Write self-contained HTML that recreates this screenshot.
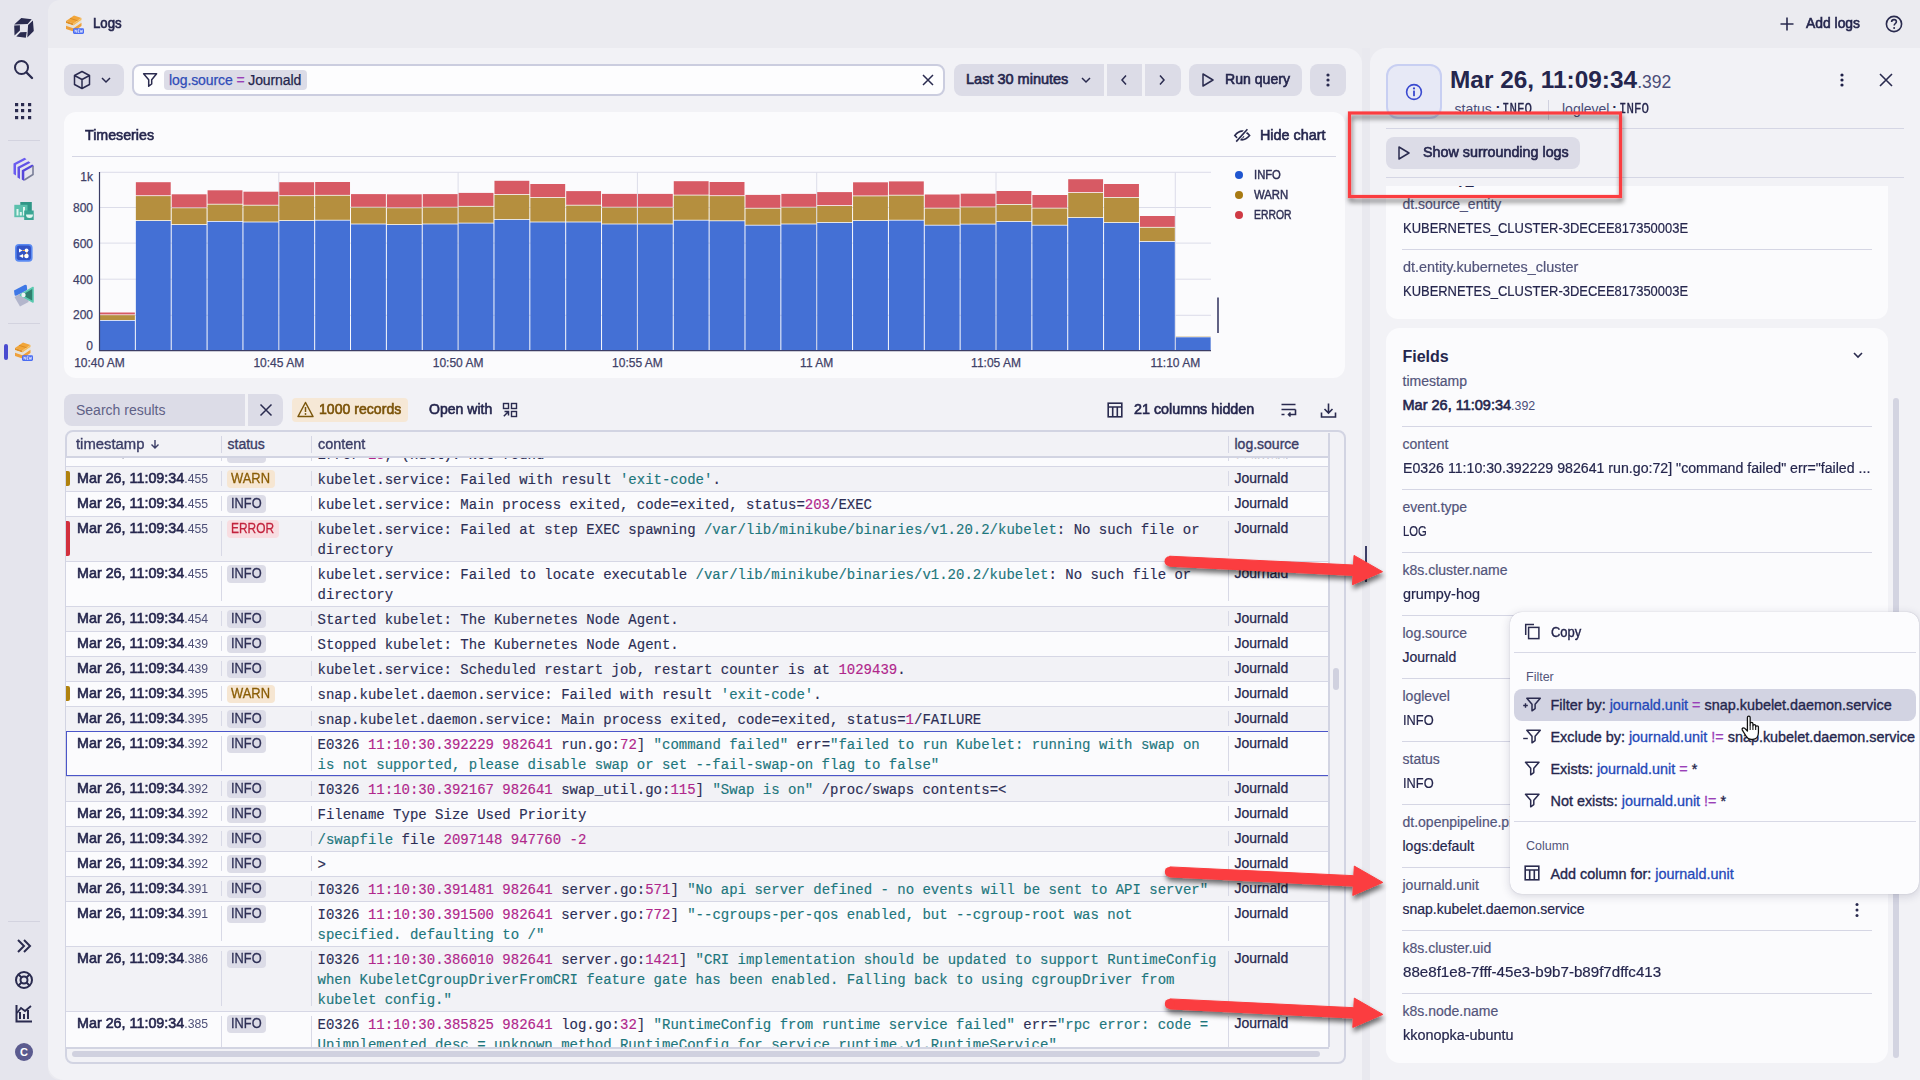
<!DOCTYPE html>
<html><head><meta charset="utf-8"><title>Logs</title>
<style>
*{box-sizing:border-box;margin:0;padding:0}
html,body{width:1920px;height:1080px;overflow:hidden}
body{position:relative;background:#e5e5ed;font-family:"Liberation Sans",sans-serif;color:#25264d;font-size:14px}
.a{position:absolute}
.b{font-weight:bold}
.mono{font-family:"Liberation Mono",monospace}
svg{display:block}
.nowrap{white-space:nowrap}
</style></head><body>

<div class="a" style="left:48px;top:0;width:1872px;height:1080px;background:#ebebf0;border-radius:12px 0 0 12px;overflow:hidden">
</div>
<div class="a" style="left:48px;top:48px;width:1314px;height:1032px;background:#f2f2f6;border-radius:0 16px 0 16px"></div>
<div class="a" style="left:1362px;top:48px;width:8px;height:1032px;background:#e9e9ef"></div>
<div class="a" style="left:1370px;top:48px;width:550px;height:1032px;background:#f2f2f6;border-radius:16px 0 0 0"></div>
<svg class="a" style="left:0;top:0" width="48" height="48" viewBox="0 0 48 48"><path d="M21.3 18.1 L31.7 19.3 L27.6 23.9 L14.2 24.4 Z M14.2 25.6 L19.9 25.3 L19.9 30.4 L14.5 35.4 Z M16.3 36.6 L20.4 32.3 L26.7 32.1 L25.8 37.8 Z M28.1 25 L32.9 20.6 L33.8 31 L27.3 37.5 Z" fill="#2a2b4f"/></svg>
<svg class="a" style="left:13px;top:59px" width="21" height="21" viewBox="0 0 21 21"><circle cx="8.5" cy="8.5" r="6.5" fill="none" stroke="#2a2b4f" stroke-width="2"/><path d="M13.5 13.5 L19 19" stroke="#2a2b4f" stroke-width="2.4" stroke-linecap="round"/></svg>
<svg class="a" style="left:14px;top:102px" width="20" height="20" viewBox="0 0 20 20"><rect x="1" y="1" width="3.2" height="3.2" fill="#2a2b4f"/><rect x="1" y="7" width="3.2" height="3.2" fill="#2a2b4f"/><rect x="1" y="14" width="3.2" height="3.2" fill="#2a2b4f"/><rect x="7" y="1" width="3.2" height="3.2" fill="#2a2b4f"/><rect x="7" y="7" width="3.2" height="3.2" fill="#2a2b4f"/><rect x="7" y="14" width="3.2" height="3.2" fill="#2a2b4f"/><rect x="14" y="1" width="3.2" height="3.2" fill="#2a2b4f"/><rect x="14" y="7" width="3.2" height="3.2" fill="#2a2b4f"/><rect x="14" y="14" width="3.2" height="3.2" fill="#2a2b4f"/></svg>
<div class="a" style="left:8px;top:140px;width:32px;height:1px;background:#d3d3df"></div>
<svg class="a" style="left:0;top:150px" width="48" height="34" viewBox="0 150 48 34"><g fill="#6b5cf0"><path d="M13.5 163.5 L24.5 157.8 L26.5 159.2 L16 164.8 L16 175.5 L13.5 174 Z"/><path d="M17.5 167 L28.5 161.3 L30.5 162.7 L20 168.3 L20 179 L17.5 177.5 Z" fill="#6152e6"/><path d="M21.8 170.2 L32.2 164.6 L34 166 L24.3 171.6 L24.3 181 L21.8 179.6 Z" fill="#5647da"/></g><path d="M33 166 L33 174.5 L24.3 180" fill="none" stroke="#7a7f98" stroke-width="1.6"/></svg>
<svg class="a" style="left:0;top:198px" width="48" height="26" viewBox="0 198 48 26"><rect x="20.3" y="202" width="11.5" height="10" fill="#2f9686"/><rect x="14.3" y="204.8" width="13.2" height="12.4" fill="#5cc0ad"/><rect x="16.5" y="209" width="2" height="6.5" fill="#dff6f0"/><rect x="19.8" y="212" width="2" height="3.5" fill="#dff6f0"/><rect x="23" y="207" width="2" height="8.5" fill="#dff6f0"/><rect x="24.2" y="210.5" width="9.5" height="9.5" fill="#3aa593"/><path d="M26 214.5 A3.5 3.5 0 0 0 33 214.5 Z" fill="#dff6f0"/></svg>
<svg class="a" style="left:0;top:240px" width="48" height="26" viewBox="0 240 48 26"><rect x="15" y="244" width="17.6" height="17.7" rx="4" fill="#5b8bf2"/><rect x="16.6" y="245.6" width="14.4" height="14.5" rx="2.8" fill="#3354c6"/><path d="M19 248.5 L22.5 250.5 L19 252.5 Z" fill="#fff"/><circle cx="26.5" cy="250.3" r="1.9" fill="#fff"/><path d="M22.5 250.5 H25 M26.8 252 V255 M21.5 256 H25" stroke="#f0a84a" stroke-width="1.1"/><path d="M23 254 L19 256 L23 258 Z" fill="#fff"/><circle cx="26.5" cy="256" r="2.2" fill="#fff"/></svg>
<svg class="a" style="left:0;top:282px" width="48" height="28" viewBox="0 282 48 28"><path d="M14.5 297 L24 291.5 L28.5 296 L28.5 302 L20 306.5 Z" fill="#8b90b0" opacity="0.55"/><path d="M14 290.5 L24.5 285 Q26 284.3 26.8 285.6 L27.2 290 L16.5 295.5 Q14.8 296.2 14.5 294.5 Z" fill="#3f78e6"/><path d="M33 287.5 L33 302 L20.5 295 Z" fill="#2f7f6e" stroke="#5bcab0" stroke-width="1.6" stroke-linejoin="round"/><circle cx="23.5" cy="295" r="2.2" fill="#eef6f4"/></svg>
<div class="a" style="left:8px;top:323px;width:32px;height:1px;background:#d3d3df"></div>
<div class="a" style="left:4px;top:344px;width:4px;height:16px;border-radius:2px;background:#4a4bd0"></div>
<svg class="a" style="left:12px;top:340px" width="22" height="22" viewBox="0 0 22 22"><path d="M3 8 L11 2.5 L18.5 5 L10.5 10.5 Z" fill="#f2a63a"/><path d="M7 5.3 L14.8 7.8" stroke="#d98a20" stroke-width="0.9"/><path d="M3 8 L10.5 10.5 L10.5 12.5 L3 10 Z" fill="#e08f22"/><path d="M10.5 10.5 L18.5 5 L18.5 7 L10.5 12.5 Z" fill="#f6bd5c"/><path d="M3 10.3 L10.5 12.8 L18.5 7.3 L18.5 9.5 L10.5 15 L3 12.5 Z" fill="#e6e2d8"/><path d="M3 12.8 L10.5 15.3 L18.5 9.8 L18.5 13 L10.5 18.5 L3 16 Z" fill="#eea03a"/><rect x="10" y="15.3" width="11" height="5.6" rx="1.3" fill="#4a6cf2"/><path d="M12 19.5 V16.7 L13.6 19.5 V16.7 M15 16.7 V19.5 H16.4 M15 18.1 H16.2 M15 16.7 H16.4 M17.2 16.7 L17.8 19.5 L18.4 17.5 L19 19.5 L19.6 16.7" fill="none" stroke="#fff" stroke-width="0.6"/></svg>
<div class="a" style="left:8px;top:921px;width:32px;height:1px;background:#d3d3df"></div>
<svg class="a" style="left:16px;top:938px" width="17" height="16" viewBox="0 0 17 16"><path d="M2 2 L8 8 L2 14 M8 2 L14 8 L8 14" fill="none" stroke="#2a2b4f" stroke-width="2"/></svg>
<svg class="a" style="left:14px;top:970px" width="20" height="20" viewBox="0 0 20 20"><circle cx="10" cy="10" r="8" fill="none" stroke="#2a2b4f" stroke-width="2"/><circle cx="10" cy="10" r="3.5" fill="none" stroke="#2a2b4f" stroke-width="2"/><path d="M4.5 4.5 L7.5 7.5 M15.5 4.5 L12.5 7.5 M4.5 15.5 L7.5 12.5 M15.5 15.5 L12.5 12.5" stroke="#2a2b4f" stroke-width="2"/></svg>
<svg class="a" style="left:15px;top:1004px" width="18" height="19" viewBox="0 0 18 19"><path d="M1.5 1 L1.5 17.5 L17 17.5" fill="none" stroke="#2a2b4f" stroke-width="2"/><path d="M5 15 L5 8 M9 15 L9 10 M13 15 L13 6" stroke="#2a2b4f" stroke-width="2"/><path d="M2 9 L6 4 L10 7 L16 2" fill="none" stroke="#2a2b4f" stroke-width="1.8"/></svg>
<div class="a b" style="left:15px;top:1043px;width:18px;height:18px;border-radius:9px;background:#5b5b8f;color:#fff;font-size:11px;line-height:18px;text-align:center">C</div>
<svg class="a" style="left:63px;top:13px" width="22" height="22" viewBox="0 0 22 22"><path d="M3 8 L11 2.5 L18.5 5 L10.5 10.5 Z" fill="#f2a63a"/><path d="M7 5.3 L14.8 7.8" stroke="#d98a20" stroke-width="0.9"/><path d="M3 8 L10.5 10.5 L10.5 12.5 L3 10 Z" fill="#e08f22"/><path d="M10.5 10.5 L18.5 5 L18.5 7 L10.5 12.5 Z" fill="#f6bd5c"/><path d="M3 10.3 L10.5 12.8 L18.5 7.3 L18.5 9.5 L10.5 15 L3 12.5 Z" fill="#e6e2d8"/><path d="M3 12.8 L10.5 15.3 L18.5 9.8 L18.5 13 L10.5 18.5 L3 16 Z" fill="#eea03a"/><rect x="10" y="15.3" width="11" height="5.6" rx="1.3" fill="#4a6cf2"/><path d="M12 19.5 V16.7 L13.6 19.5 V16.7 M15 16.7 V19.5 H16.4 M15 18.1 H16.2 M15 16.7 H16.4 M17.2 16.7 L17.8 19.5 L18.4 17.5 L19 19.5 L19.6 16.7" fill="none" stroke="#fff" stroke-width="0.6"/></svg>
<div class="a nowrap" style="left:92.5px;top:13px;font-size:14.5px;line-height:20px;-webkit-text-stroke:0.6px #25264d;transform:scaleX(0.913);transform-origin:0 0">Logs</div>
<svg class="a" style="left:1779px;top:16px" width="16" height="16" viewBox="0 0 16 16"><path d="M8 1.5 V14.5 M1.5 8 H14.5" stroke="#2a2b4f" stroke-width="1.6"/></svg>
<div class="a nowrap" style="left:1806px;top:13px;font-size:14.5px;line-height:20px;-webkit-text-stroke:0.6px #25264d;transform:scaleX(0.957);transform-origin:0 0">Add logs</div>
<svg class="a" style="left:1885px;top:15px" width="18" height="18" viewBox="0 0 18 18"><circle cx="9" cy="9" r="7.6" fill="none" stroke="#2a2b4f" stroke-width="1.6"/><path d="M6.6 7 C6.6 5.4 7.7 4.6 9 4.6 C10.4 4.6 11.4 5.5 11.4 6.8 C11.4 8.4 9.2 8.6 9.2 10.4" fill="none" stroke="#2a2b4f" stroke-width="1.6"/><circle cx="9.1" cy="13" r="1" fill="#2a2b4f"/></svg>
<div class="a" style="left:64px;top:64px;width:60px;height:32px;border-radius:8px;background:#dcdce7"></div>
<svg class="a" style="left:73px;top:70px" width="18" height="20" viewBox="0 0 18 20"><path d="M9 1.5 L16.5 5.5 L16.5 14.5 L9 18.5 L1.5 14.5 L1.5 5.5 Z M1.5 5.5 L9 9.5 L16.5 5.5 M9 9.5 L9 18.5" fill="none" stroke="#2a2b4f" stroke-width="1.5" stroke-linejoin="round"/></svg>
<svg class="a" style="left:101px;top:76px" width="10" height="8" viewBox="0 0 10 8"><path d="M1 2 L5 6 L9 2" fill="none" stroke="#2a2b4f" stroke-width="1.5"/></svg>
<div class="a" style="left:132px;top:64px;width:813px;height:32px;border-radius:8px;background:#fdfdfe;border:2px solid #cbcddf"></div>
<svg class="a" style="left:142px;top:72px" width="16" height="16" viewBox="0 0 16 16"><path d="M1.6 1.8 H14.6 L9.7 7.7 V12 L6.7 14.2 V7.7 Z" fill="none" stroke="#2a2b4f" stroke-width="1.5" stroke-linejoin="round"/></svg>
<div class="a" style="left:164px;top:70px;width:143px;height:20px;border-radius:4px;background:#dcdce7"></div>
<div class="a nowrap" style="left:169px;top:70px;font-size:14px;line-height:20px;letter-spacing:-0.1px;-webkit-text-stroke:0.25px currentColor"><span style="color:#2f4cb8">log.source</span> <span style="color:#9a3fb8">=</span> Journald</div>
<svg class="a" style="left:921px;top:73px" width="14" height="14" viewBox="0 0 14 14"><path d="M2 2 L12 12 M12 2 L2 12" stroke="#2a2b4f" stroke-width="1.5"/></svg>
<div class="a" style="left:954px;top:64px;width:150px;height:32px;border-radius:8px 0 0 8px;background:#dcdce7"></div>
<div class="a" style="left:1107px;top:64px;width:35px;height:32px;background:#dcdce7"></div>
<div class="a" style="left:1145px;top:64px;width:36px;height:32px;border-radius:0 8px 8px 0;background:#dcdce7"></div>
<div class="a nowrap" style="left:966px;top:69px;font-size:14.5px;line-height:20px;-webkit-text-stroke:0.6px #25264d;transform:scaleX(1.000);transform-origin:0 0">Last 30 minutes</div>
<svg class="a" style="left:1081px;top:76px" width="10" height="8" viewBox="0 0 10 8"><path d="M1 2 L5 6 L9 2" fill="none" stroke="#2a2b4f" stroke-width="1.5"/></svg>
<svg class="a" style="left:1120px;top:74px" width="8" height="12" viewBox="0 0 8 12"><path d="M6 1.5 L2 6 L6 10.5" fill="none" stroke="#2a2b4f" stroke-width="1.5"/></svg>
<svg class="a" style="left:1158px;top:74px" width="8" height="12" viewBox="0 0 8 12"><path d="M2 1.5 L6 6 L2 10.5" fill="none" stroke="#2a2b4f" stroke-width="1.5"/></svg>
<div class="a" style="left:1189px;top:64px;width:113px;height:32px;border-radius:8px;background:#dcdce7"></div>
<svg class="a" style="left:1201px;top:72px" width="14" height="16" viewBox="0 0 14 16"><path d="M2 2 L12 8 L2 14 Z" fill="none" stroke="#2a2b4f" stroke-width="1.5" stroke-linejoin="round"/></svg>
<div class="a nowrap" style="left:1225px;top:69px;font-size:14.5px;line-height:20px;-webkit-text-stroke:0.6px #25264d;transform:scaleX(0.972);transform-origin:0 0">Run query</div>
<div class="a" style="left:1310px;top:64px;width:36px;height:32px;border-radius:8px;background:#dcdce7"></div>
<svg class="a" style="left:1325px;top:72px" width="6" height="16" viewBox="0 0 6 16"><circle cx="3" cy="3" r="1.6" fill="#2a2b4f"/><circle cx="3" cy="8" r="1.6" fill="#2a2b4f"/><circle cx="3" cy="13" r="1.6" fill="#2a2b4f"/></svg>
<div class="a" style="left:64px;top:112px;width:1281px;height:266px;border-radius:12px;background:#fbfbfd"></div>
<div class="a nowrap" style="left:84.5px;top:125px;font-size:14.5px;line-height:20px;-webkit-text-stroke:0.6px #25264d;transform:scaleX(0.981);transform-origin:0 0">Timeseries</div>
<svg class="a" style="left:1230px;top:124px" width="24" height="22" viewBox="1230 124 24 22"><path d="M1234.8 135.5 Q1242 126.8 1249.6 135.5 Q1242 144.2 1234.8 135.5 Z" fill="none" stroke="#2a2b4f" stroke-width="1.6"/><path d="M1240.6 138.8 Q1243.2 138.6 1243.9 136.2" fill="none" stroke="#2a2b4f" stroke-width="1.2"/><path d="M1235.8 142 L1247.6 128.8" stroke="#fbfbfd" stroke-width="3.6"/><path d="M1236.2 141.6 L1247.4 129.2" stroke="#2a2b4f" stroke-width="1.6"/></svg>
<div class="a nowrap" style="left:1260px;top:125px;font-size:14.5px;line-height:20px;-webkit-text-stroke:0.6px #25264d;transform:scaleX(0.990);transform-origin:0 0">Hide chart</div>
<div class="a" style="left:72px;top:156px;width:1264px;height:1px;background:#d5d6e4"></div>
<svg class="a" style="left:0;top:0;overflow:visible" width="1920" height="400" viewBox="0 0 1920 400"><line x1="99.5" y1="172.3" x2="1211" y2="172.3" stroke="#dcdde9" stroke-width="1"/><line x1="99.5" y1="207.5" x2="1211" y2="207.5" stroke="#dcdde9" stroke-width="1"/><line x1="99.5" y1="243.1" x2="1211" y2="243.1" stroke="#dcdde9" stroke-width="1"/><line x1="99.5" y1="279.2" x2="1211" y2="279.2" stroke="#dcdde9" stroke-width="1"/><line x1="99.5" y1="315.3" x2="1211" y2="315.3" stroke="#dcdde9" stroke-width="1"/><line x1="278.8" y1="172.3" x2="278.8" y2="350" stroke="#dcdde9" stroke-width="1"/><line x1="458.1" y1="172.3" x2="458.1" y2="350" stroke="#dcdde9" stroke-width="1"/><line x1="637.4" y1="172.3" x2="637.4" y2="350" stroke="#dcdde9" stroke-width="1"/><line x1="816.7" y1="172.3" x2="816.7" y2="350" stroke="#dcdde9" stroke-width="1"/><line x1="996.0" y1="172.3" x2="996.0" y2="350" stroke="#dcdde9" stroke-width="1"/><line x1="1175.3" y1="172.3" x2="1175.3" y2="350" stroke="#dcdde9" stroke-width="1"/><rect x="100.00" y="320.80" width="34.86" height="29.70" fill="#4470d5"/><rect x="100.00" y="315.20" width="34.86" height="4.80" fill="#b58f3e"/><rect x="100.00" y="312.50" width="34.86" height="1.90" fill="#d75a64"/><rect x="135.86" y="221.00" width="34.86" height="129.50" fill="#4470d5"/><rect x="135.86" y="196.10" width="34.86" height="24.10" fill="#b58f3e"/><rect x="135.86" y="182.20" width="34.86" height="13.10" fill="#d75a64"/><rect x="171.72" y="225.00" width="34.86" height="125.50" fill="#4470d5"/><rect x="171.72" y="208.20" width="34.86" height="16.00" fill="#b58f3e"/><rect x="171.72" y="194.30" width="34.86" height="13.10" fill="#d75a64"/><rect x="207.58" y="221.80" width="34.86" height="128.70" fill="#4470d5"/><rect x="207.58" y="204.60" width="34.86" height="16.40" fill="#b58f3e"/><rect x="207.58" y="190.30" width="34.86" height="13.50" fill="#d75a64"/><rect x="243.44" y="222.40" width="34.86" height="128.10" fill="#4470d5"/><rect x="243.44" y="205.60" width="34.86" height="16.00" fill="#b58f3e"/><rect x="243.44" y="191.70" width="34.86" height="13.10" fill="#d75a64"/><rect x="279.30" y="221.00" width="34.86" height="129.50" fill="#4470d5"/><rect x="279.30" y="196.10" width="34.86" height="24.10" fill="#b58f3e"/><rect x="279.30" y="182.20" width="34.86" height="13.10" fill="#d75a64"/><rect x="315.16" y="220.60" width="34.86" height="129.90" fill="#4470d5"/><rect x="315.16" y="195.70" width="34.86" height="24.10" fill="#b58f3e"/><rect x="315.16" y="182.00" width="34.86" height="12.90" fill="#d75a64"/><rect x="351.02" y="224.40" width="34.86" height="126.10" fill="#4470d5"/><rect x="351.02" y="207.60" width="34.86" height="16.00" fill="#b58f3e"/><rect x="351.02" y="194.10" width="34.86" height="12.70" fill="#d75a64"/><rect x="386.88" y="225.00" width="34.86" height="125.50" fill="#4470d5"/><rect x="386.88" y="208.20" width="34.86" height="16.00" fill="#b58f3e"/><rect x="386.88" y="194.30" width="34.86" height="13.10" fill="#d75a64"/><rect x="422.74" y="224.40" width="34.86" height="126.10" fill="#4470d5"/><rect x="422.74" y="207.60" width="34.86" height="16.00" fill="#b58f3e"/><rect x="422.74" y="194.10" width="34.86" height="12.70" fill="#d75a64"/><rect x="458.60" y="223.50" width="34.86" height="127.00" fill="#4470d5"/><rect x="458.60" y="206.70" width="34.86" height="16.00" fill="#b58f3e"/><rect x="458.60" y="192.90" width="34.86" height="13.00" fill="#d75a64"/><rect x="494.46" y="219.90" width="34.86" height="130.60" fill="#4470d5"/><rect x="494.46" y="194.90" width="34.86" height="24.20" fill="#b58f3e"/><rect x="494.46" y="180.80" width="34.86" height="13.30" fill="#d75a64"/><rect x="530.32" y="222.40" width="34.86" height="128.10" fill="#4470d5"/><rect x="530.32" y="197.90" width="34.86" height="23.70" fill="#b58f3e"/><rect x="530.32" y="184.00" width="34.86" height="13.10" fill="#d75a64"/><rect x="566.18" y="222.40" width="34.86" height="128.10" fill="#4470d5"/><rect x="566.18" y="205.60" width="34.86" height="16.00" fill="#b58f3e"/><rect x="566.18" y="191.10" width="34.86" height="13.70" fill="#d75a64"/><rect x="602.04" y="224.40" width="34.86" height="126.10" fill="#4470d5"/><rect x="602.04" y="207.60" width="34.86" height="16.00" fill="#b58f3e"/><rect x="602.04" y="193.90" width="34.86" height="12.90" fill="#d75a64"/><rect x="637.90" y="224.40" width="34.86" height="126.10" fill="#4470d5"/><rect x="637.90" y="207.60" width="34.86" height="16.00" fill="#b58f3e"/><rect x="637.90" y="193.90" width="34.86" height="12.90" fill="#d75a64"/><rect x="673.76" y="220.60" width="34.86" height="129.90" fill="#4470d5"/><rect x="673.76" y="195.50" width="34.86" height="24.30" fill="#b58f3e"/><rect x="673.76" y="181.20" width="34.86" height="13.50" fill="#d75a64"/><rect x="709.62" y="221.20" width="34.86" height="129.30" fill="#4470d5"/><rect x="709.62" y="196.10" width="34.86" height="24.30" fill="#b58f3e"/><rect x="709.62" y="182.00" width="34.86" height="13.30" fill="#d75a64"/><rect x="745.48" y="225.60" width="34.86" height="124.90" fill="#4470d5"/><rect x="745.48" y="208.60" width="34.86" height="16.20" fill="#b58f3e"/><rect x="745.48" y="194.90" width="34.86" height="12.90" fill="#d75a64"/><rect x="781.34" y="224.40" width="34.86" height="126.10" fill="#4470d5"/><rect x="781.34" y="207.60" width="34.86" height="16.00" fill="#b58f3e"/><rect x="781.34" y="193.90" width="34.86" height="12.90" fill="#d75a64"/><rect x="817.20" y="222.90" width="34.86" height="127.60" fill="#4470d5"/><rect x="817.20" y="206.00" width="34.86" height="16.10" fill="#b58f3e"/><rect x="817.20" y="192.10" width="34.86" height="13.10" fill="#d75a64"/><rect x="853.06" y="221.00" width="34.86" height="129.50" fill="#4470d5"/><rect x="853.06" y="196.30" width="34.86" height="23.90" fill="#b58f3e"/><rect x="853.06" y="182.30" width="34.86" height="13.20" fill="#d75a64"/><rect x="888.92" y="220.60" width="34.86" height="129.90" fill="#4470d5"/><rect x="888.92" y="195.60" width="34.86" height="24.20" fill="#b58f3e"/><rect x="888.92" y="181.40" width="34.86" height="13.40" fill="#d75a64"/><rect x="924.78" y="225.60" width="34.86" height="124.90" fill="#4470d5"/><rect x="924.78" y="208.50" width="34.86" height="16.30" fill="#b58f3e"/><rect x="924.78" y="194.50" width="34.86" height="13.20" fill="#d75a64"/><rect x="960.64" y="224.50" width="34.86" height="126.00" fill="#4470d5"/><rect x="960.64" y="207.40" width="34.86" height="16.30" fill="#b58f3e"/><rect x="960.64" y="193.70" width="34.86" height="12.90" fill="#d75a64"/><rect x="996.50" y="221.90" width="34.86" height="128.60" fill="#4470d5"/><rect x="996.50" y="204.80" width="34.86" height="16.30" fill="#b58f3e"/><rect x="996.50" y="191.00" width="34.86" height="13.00" fill="#d75a64"/><rect x="1032.36" y="225.60" width="34.86" height="124.90" fill="#4470d5"/><rect x="1032.36" y="208.50" width="34.86" height="16.30" fill="#b58f3e"/><rect x="1032.36" y="195.00" width="34.86" height="12.70" fill="#d75a64"/><rect x="1068.22" y="218.00" width="34.86" height="132.50" fill="#4470d5"/><rect x="1068.22" y="193.00" width="34.86" height="24.20" fill="#b58f3e"/><rect x="1068.22" y="179.20" width="34.86" height="13.00" fill="#d75a64"/><rect x="1104.08" y="223.00" width="34.86" height="127.50" fill="#4470d5"/><rect x="1104.08" y="197.80" width="34.86" height="24.40" fill="#b58f3e"/><rect x="1104.08" y="184.00" width="34.86" height="13.00" fill="#d75a64"/><rect x="1139.94" y="241.90" width="34.86" height="108.60" fill="#4470d5"/><rect x="1139.94" y="227.70" width="34.86" height="13.40" fill="#b58f3e"/><rect x="1139.94" y="216.00" width="34.86" height="10.90" fill="#d75a64"/><rect x="1175.80" y="337.30" width="34.86" height="13.20" fill="#4470d5"/><rect x="1175.80" y="336.20" width="34.86" height="0.30" fill="#b58f3e"/><line x1="99.5" y1="172" x2="99.5" y2="351" stroke="#3b3d66" stroke-width="1.2"/><line x1="99" y1="350.6" x2="1211" y2="350.6" stroke="#3b3d66" stroke-width="1.2"/><line x1="1218" y1="297.5" x2="1218" y2="333" stroke="#3b3d66" stroke-width="1.6"/></svg>
<div class="a nowrap" style="right:1827px;top:169.5px;font-size:12px;line-height:14px;color:#3f4168;-webkit-text-stroke:0.25px #3f4168;text-align:right">1k</div>
<div class="a nowrap" style="right:1827px;top:200.5px;font-size:12px;line-height:14px;color:#3f4168;-webkit-text-stroke:0.25px #3f4168;text-align:right">800</div>
<div class="a nowrap" style="right:1827px;top:236.5px;font-size:12px;line-height:14px;color:#3f4168;-webkit-text-stroke:0.25px #3f4168;text-align:right">600</div>
<div class="a nowrap" style="right:1827px;top:272.5px;font-size:12px;line-height:14px;color:#3f4168;-webkit-text-stroke:0.25px #3f4168;text-align:right">400</div>
<div class="a nowrap" style="right:1827px;top:307.5px;font-size:12px;line-height:14px;color:#3f4168;-webkit-text-stroke:0.25px #3f4168;text-align:right">200</div>
<div class="a nowrap" style="right:1827px;top:339.0px;font-size:12px;line-height:14px;color:#3f4168;-webkit-text-stroke:0.25px #3f4168;text-align:right">0</div>
<div class="a nowrap" style="left:99.5px;top:356px;width:80px;margin-left:-40px;text-align:center;font-size:12px;line-height:14px;color:#3f4168;-webkit-text-stroke:0.25px #3f4168">10:40 AM</div>
<div class="a nowrap" style="left:278.8px;top:356px;width:80px;margin-left:-40px;text-align:center;font-size:12px;line-height:14px;color:#3f4168;-webkit-text-stroke:0.25px #3f4168">10:45 AM</div>
<div class="a nowrap" style="left:458.1px;top:356px;width:80px;margin-left:-40px;text-align:center;font-size:12px;line-height:14px;color:#3f4168;-webkit-text-stroke:0.25px #3f4168">10:50 AM</div>
<div class="a nowrap" style="left:637.4px;top:356px;width:80px;margin-left:-40px;text-align:center;font-size:12px;line-height:14px;color:#3f4168;-webkit-text-stroke:0.25px #3f4168">10:55 AM</div>
<div class="a nowrap" style="left:816.7px;top:356px;width:80px;margin-left:-40px;text-align:center;font-size:12px;line-height:14px;color:#3f4168;-webkit-text-stroke:0.25px #3f4168">11 AM</div>
<div class="a nowrap" style="left:996.0px;top:356px;width:80px;margin-left:-40px;text-align:center;font-size:12px;line-height:14px;color:#3f4168;-webkit-text-stroke:0.25px #3f4168">11:05 AM</div>
<div class="a nowrap" style="left:1175.3px;top:356px;width:80px;margin-left:-40px;text-align:center;font-size:12px;line-height:14px;color:#3f4168;-webkit-text-stroke:0.25px #3f4168">11:10 AM</div>
<div class="a" style="left:1235px;top:171.0px;width:8px;height:8px;border-radius:4px;background:#1f56d0"></div>
<div class="a nowrap" style="left:1253.5px;top:167.5px;font-size:12.5px;line-height:14px;color:#2f3055;-webkit-text-stroke:0.45px #2f3055;transform:scaleX(0.900);transform-origin:0 0">INFO</div>
<div class="a" style="left:1235px;top:191.0px;width:8px;height:8px;border-radius:4px;background:#a87a12"></div>
<div class="a nowrap" style="left:1253.5px;top:187.5px;font-size:12.5px;line-height:14px;color:#2f3055;-webkit-text-stroke:0.45px #2f3055;transform:scaleX(0.907);transform-origin:0 0">WARN</div>
<div class="a" style="left:1235px;top:211.0px;width:8px;height:8px;border-radius:4px;background:#cf3a44"></div>
<div class="a nowrap" style="left:1253.5px;top:207.5px;font-size:12.5px;line-height:14px;color:#2f3055;-webkit-text-stroke:0.45px #2f3055;transform:scaleX(0.830);transform-origin:0 0">ERROR</div>
<div class="a" style="left:64px;top:394px;width:181px;height:32px;border-radius:8px 0 0 8px;background:#dcdce7"></div>
<div class="a" style="left:248px;top:394px;width:35px;height:32px;border-radius:0 8px 8px 0;background:#dcdce7"></div>
<div class="a nowrap" style="left:76px;top:400px;font-size:14px;line-height:20px;color:#5f6186">Search results</div>
<svg class="a" style="left:259px;top:403px" width="14" height="14" viewBox="0 0 14 14"><path d="M1.5 1.5 L12.5 12.5 M12.5 1.5 L1.5 12.5" stroke="#2a2b4f" stroke-width="1.5"/></svg>
<div class="a" style="left:292px;top:398px;width:116px;height:24px;border-radius:4px;background:#f6e8d6"></div>
<svg class="a" style="left:297px;top:401px" width="17" height="17" viewBox="0 0 17 17"><path d="M8.5 1.5 L16 15.5 L1 15.5 Z" fill="none" stroke="#7a560c" stroke-width="1.5" stroke-linejoin="round"/><path d="M8.5 6 V11" stroke="#7a560c" stroke-width="1.5"/><circle cx="8.5" cy="13" r="0.9" fill="#7a560c"/></svg>
<div class="a nowrap" style="left:318.5px;top:399px;font-size:14.5px;line-height:20px;color:#7a5208;-webkit-text-stroke:0.6px #7a5208;transform:scaleX(0.972);transform-origin:0 0">1000 records</div>
<div class="a nowrap" style="left:428.5px;top:399px;font-size:14.5px;line-height:20px;-webkit-text-stroke:0.6px #25264d;transform:scaleX(0.969);transform-origin:0 0">Open with</div>
<svg class="a" style="left:502px;top:402px" width="16" height="16" viewBox="0 0 16 16"><rect x="1.5" y="1.5" width="5" height="5" fill="none" stroke="#2a2b4f" stroke-width="1.4"/><rect x="9.5" y="1.5" width="5" height="5" fill="none" stroke="#2a2b4f" stroke-width="1.4"/><rect x="9.5" y="9.5" width="5" height="5" fill="none" stroke="#2a2b4f" stroke-width="1.4"/><path d="M1.8 14.2 L6.5 9.5 M2.5 9.5 H6.5 V13.5" fill="none" stroke="#2a2b4f" stroke-width="1.5"/></svg>
<svg class="a" style="left:1107px;top:402px" width="16" height="16" viewBox="0 0 16 16"><rect x="1.2" y="1.2" width="13.6" height="13.6" fill="none" stroke="#2a2b4f" stroke-width="1.6"/><path d="M1.2 5 H14.8 M5.7 5 V14.8 M10.3 5 V14.8" stroke="#2a2b4f" stroke-width="1.6"/></svg>
<div class="a nowrap" style="left:1133.5px;top:399px;font-size:14.5px;line-height:20px;-webkit-text-stroke:0.6px #25264d;transform:scaleX(0.988);transform-origin:0 0">21 columns hidden</div>
<svg class="a" style="left:1280px;top:402px" width="17" height="17" viewBox="0 0 17 17"><path d="M1.5 2.5 H15.5 M1.5 7.5 H15.5 M1.5 12.5 H4.5" stroke="#2a2b4f" stroke-width="1.6"/><path d="M15.5 7.5 V12.5 H8.5 M10.5 10.5 L8.5 12.5 L10.5 14.5" fill="none" stroke="#2a2b4f" stroke-width="1.6"/></svg>
<svg class="a" style="left:1320px;top:402px" width="17" height="17" viewBox="0 0 17 17"><path d="M8.5 1.5 V11 M4.5 7 L8.5 11 L12.5 7" fill="none" stroke="#2a2b4f" stroke-width="1.6"/><path d="M1.5 10.5 V15 H15.5 V10.5" fill="none" stroke="#2a2b4f" stroke-width="1.6"/></svg>
<div class="a" style="left:65px;top:430px;width:1281px;height:634px;border:2px solid #d2d4e2;border-radius:8px;background:#f2f2f6"></div>
<div class="a b nowrap" style="left:76px;top:434px;font-size:14px;font-weight:normal;-webkit-text-stroke:0.35px #3b3d66;line-height:20px;color:#3b3d66;transform:scaleX(1.06);transform-origin:0 0">timestamp</div>
<svg class="a" style="left:149px;top:438px" width="12" height="12" viewBox="0 0 12 12"><path d="M6 2 V10 M2.5 6.5 L6 10 L9.5 6.5" fill="none" stroke="#3b3d66" stroke-width="1.4"/></svg>
<div class="a nowrap" style="left:227.5px;top:434px;font-size:14px;-webkit-text-stroke:0.35px #3b3d66;line-height:20px;color:#3b3d66">status</div>
<div class="a nowrap" style="left:317.5px;top:434px;font-size:14px;-webkit-text-stroke:0.35px #3b3d66;line-height:20px;color:#3b3d66;transform:scaleX(1.03);transform-origin:0 0">content</div>
<div class="a b nowrap" style="left:1234.5px;top:434px;font-size:14px;font-weight:normal;-webkit-text-stroke:0.35px #3b3d66;line-height:20px;color:#3b3d66;transform:scaleX(1.0);transform-origin:0 0">log.source</div>
<div class="a" style="left:221px;top:436px;width:1px;height:17px;background:#d5d6e4"></div>
<div class="a" style="left:311px;top:436px;width:1px;height:17px;background:#d5d6e4"></div>
<div class="a" style="left:1228px;top:436px;width:1px;height:17px;background:#d5d6e4"></div>
<div class="a" style="left:66px;top:456px;width:1263px;height:2px;background:#d2d4e2"></div>
<div class="a" style="left:1328px;top:433px;width:2px;height:614px;background:#d2d4e2"></div>
<div class="a" style="left:1333px;top:668px;width:6px;height:22px;border-radius:3px;background:#d0d1df"></div>
<div class="a" style="left:66px;top:458px;width:1262px;height:589px;overflow:hidden">
<div class="a" style="left:0;top:-17px;width:1262px;height:25px;background:#fbfbfd;border-top:1px solid #d6d7e5"></div>
<div class="a" style="left:155px;top:-12px;width:1px;height:15px;background:#d8d9e6"></div>
<div class="a" style="left:245px;top:-12px;width:1px;height:15px;background:#d8d9e6"></div>
<div class="a" style="left:1162px;top:-12px;width:1px;height:15px;background:#d8d9e6"></div>
<div class="a nowrap" style="left:10.5px;top:-17px;line-height:20px;transform:scaleX(0.988);transform-origin:0 0"><span style="font-size:14.5px;-webkit-text-stroke:0.6px #25264d">Mar 26, 11:09:34</span><span style="font-size:12.4px;color:#4e5078">.455</span></div>
<div class="a" style="left:161px;top:-13px;width:39px;height:18px;border-radius:4px;background:#dcdce7"></div>
<div class="a nowrap" style="left:165px;top:-18px;font-size:14.5px;line-height:20px;color:#2f3157;-webkit-text-stroke:0.3px #2f3157;transform:scaleX(0.884);transform-origin:0 0">INFO</div>
<div class="a nowrap mono" style="left:251.5px;top:-13px;font-size:14px;line-height:20px;color:#2c2e55;-webkit-text-stroke:0.15px currentColor">Error <span style="color:#b0268b">15</span>, (null): Not found</div>
<div class="a nowrap" style="left:1168.5px;top:-15px;font-size:14px;line-height:20px;-webkit-text-stroke:0.25px #25264d">Journald</div>
<div class="a" style="left:0;top:8px;width:1262px;height:25px;background:#f2f2f6;border-top:1px solid #d6d7e5"></div>
<div class="a" style="left:155px;top:13px;width:1px;height:15px;background:#d8d9e6"></div>
<div class="a" style="left:245px;top:13px;width:1px;height:15px;background:#d8d9e6"></div>
<div class="a" style="left:1162px;top:13px;width:1px;height:15px;background:#d8d9e6"></div>
<div class="a" style="left:0;top:13px;width:4px;height:15px;border-radius:0 2px 2px 0;background:#b0820e"></div>
<div class="a nowrap" style="left:10.5px;top:10px;line-height:20px;transform:scaleX(0.988);transform-origin:0 0"><span style="font-size:14.5px;-webkit-text-stroke:0.6px #25264d">Mar 26, 11:09:34</span><span style="font-size:12.4px;color:#4e5078">.455</span></div>
<div class="a" style="left:161px;top:12px;width:48px;height:18px;border-radius:4px;background:#f6e6d2"></div>
<div class="a nowrap" style="left:165px;top:10px;font-size:14.5px;line-height:20px;color:#8a5d05;-webkit-text-stroke:0.3px #8a5d05;transform:scaleX(0.891);transform-origin:0 0">WARN</div>
<div class="a nowrap mono" style="left:251.5px;top:12px;font-size:14px;line-height:20px;color:#2c2e55;-webkit-text-stroke:0.15px currentColor">kubelet.service: Failed with result <span style="color:#1d767c">'exit-code'</span>.</div>
<div class="a nowrap" style="left:1168.5px;top:10px;font-size:14px;line-height:20px;-webkit-text-stroke:0.25px #25264d">Journald</div>
<div class="a" style="left:0;top:33px;width:1262px;height:25px;background:#fbfbfd;border-top:1px solid #d6d7e5"></div>
<div class="a" style="left:155px;top:38px;width:1px;height:15px;background:#d8d9e6"></div>
<div class="a" style="left:245px;top:38px;width:1px;height:15px;background:#d8d9e6"></div>
<div class="a" style="left:1162px;top:38px;width:1px;height:15px;background:#d8d9e6"></div>
<div class="a nowrap" style="left:10.5px;top:35px;line-height:20px;transform:scaleX(0.988);transform-origin:0 0"><span style="font-size:14.5px;-webkit-text-stroke:0.6px #25264d">Mar 26, 11:09:34</span><span style="font-size:12.4px;color:#4e5078">.455</span></div>
<div class="a" style="left:161px;top:37px;width:39px;height:18px;border-radius:4px;background:#dcdce7"></div>
<div class="a nowrap" style="left:165px;top:35px;font-size:14.5px;line-height:20px;color:#2f3157;-webkit-text-stroke:0.3px #2f3157;transform:scaleX(0.884);transform-origin:0 0">INFO</div>
<div class="a nowrap mono" style="left:251.5px;top:37px;font-size:14px;line-height:20px;color:#2c2e55;-webkit-text-stroke:0.15px currentColor">kubelet.service: Main process exited, code=exited, status=<span style="color:#b0268b">203</span>/EXEC</div>
<div class="a nowrap" style="left:1168.5px;top:35px;font-size:14px;line-height:20px;-webkit-text-stroke:0.25px #25264d">Journald</div>
<div class="a" style="left:0;top:58px;width:1262px;height:45px;background:#f2f2f6;border-top:1px solid #d6d7e5"></div>
<div class="a" style="left:155px;top:63px;width:1px;height:35px;background:#d8d9e6"></div>
<div class="a" style="left:245px;top:63px;width:1px;height:35px;background:#d8d9e6"></div>
<div class="a" style="left:1162px;top:63px;width:1px;height:35px;background:#d8d9e6"></div>
<div class="a" style="left:0;top:63px;width:4px;height:35px;border-radius:0 2px 2px 0;background:#d2303d"></div>
<div class="a nowrap" style="left:10.5px;top:60px;line-height:20px;transform:scaleX(0.988);transform-origin:0 0"><span style="font-size:14.5px;-webkit-text-stroke:0.6px #25264d">Mar 26, 11:09:34</span><span style="font-size:12.4px;color:#4e5078">.455</span></div>
<div class="a" style="left:161px;top:62px;width:52px;height:18px;border-radius:4px;background:#f8dde1"></div>
<div class="a nowrap" style="left:165px;top:60px;font-size:14.5px;line-height:20px;color:#c2233d;-webkit-text-stroke:0.3px #c2233d;transform:scaleX(0.821);transform-origin:0 0">ERROR</div>
<div class="a nowrap mono" style="left:251.5px;top:62px;font-size:14px;line-height:20px;color:#2c2e55;-webkit-text-stroke:0.15px currentColor">kubelet.service: Failed at step EXEC spawning <span style="color:#1d767c">/var/lib/minikube/binaries/v1.20.2/kubelet</span>: No such file or</div>
<div class="a nowrap mono" style="left:251.5px;top:82px;font-size:14px;line-height:20px;color:#2c2e55;-webkit-text-stroke:0.15px currentColor">directory</div>
<div class="a nowrap" style="left:1168.5px;top:60px;font-size:14px;line-height:20px;-webkit-text-stroke:0.25px #25264d">Journald</div>
<div class="a" style="left:0;top:103px;width:1262px;height:45px;background:#fbfbfd;border-top:1px solid #d6d7e5"></div>
<div class="a" style="left:155px;top:108px;width:1px;height:35px;background:#d8d9e6"></div>
<div class="a" style="left:245px;top:108px;width:1px;height:35px;background:#d8d9e6"></div>
<div class="a" style="left:1162px;top:108px;width:1px;height:35px;background:#d8d9e6"></div>
<div class="a nowrap" style="left:10.5px;top:105px;line-height:20px;transform:scaleX(0.988);transform-origin:0 0"><span style="font-size:14.5px;-webkit-text-stroke:0.6px #25264d">Mar 26, 11:09:34</span><span style="font-size:12.4px;color:#4e5078">.455</span></div>
<div class="a" style="left:161px;top:107px;width:39px;height:18px;border-radius:4px;background:#dcdce7"></div>
<div class="a nowrap" style="left:165px;top:105px;font-size:14.5px;line-height:20px;color:#2f3157;-webkit-text-stroke:0.3px #2f3157;transform:scaleX(0.884);transform-origin:0 0">INFO</div>
<div class="a nowrap mono" style="left:251.5px;top:107px;font-size:14px;line-height:20px;color:#2c2e55;-webkit-text-stroke:0.15px currentColor">kubelet.service: Failed to locate executable <span style="color:#1d767c">/var/lib/minikube/binaries/v1.20.2/kubelet</span>: No such file or</div>
<div class="a nowrap mono" style="left:251.5px;top:127px;font-size:14px;line-height:20px;color:#2c2e55;-webkit-text-stroke:0.15px currentColor">directory</div>
<div class="a nowrap" style="left:1168.5px;top:105px;font-size:14px;line-height:20px;-webkit-text-stroke:0.25px #25264d">Journald</div>
<div class="a" style="left:0;top:148px;width:1262px;height:25px;background:#f2f2f6;border-top:1px solid #d6d7e5"></div>
<div class="a" style="left:155px;top:153px;width:1px;height:15px;background:#d8d9e6"></div>
<div class="a" style="left:245px;top:153px;width:1px;height:15px;background:#d8d9e6"></div>
<div class="a" style="left:1162px;top:153px;width:1px;height:15px;background:#d8d9e6"></div>
<div class="a nowrap" style="left:10.5px;top:150px;line-height:20px;transform:scaleX(0.988);transform-origin:0 0"><span style="font-size:14.5px;-webkit-text-stroke:0.6px #25264d">Mar 26, 11:09:34</span><span style="font-size:12.4px;color:#4e5078">.454</span></div>
<div class="a" style="left:161px;top:152px;width:39px;height:18px;border-radius:4px;background:#dcdce7"></div>
<div class="a nowrap" style="left:165px;top:150px;font-size:14.5px;line-height:20px;color:#2f3157;-webkit-text-stroke:0.3px #2f3157;transform:scaleX(0.884);transform-origin:0 0">INFO</div>
<div class="a nowrap mono" style="left:251.5px;top:152px;font-size:14px;line-height:20px;color:#2c2e55;-webkit-text-stroke:0.15px currentColor">Started kubelet: The Kubernetes Node Agent.</div>
<div class="a nowrap" style="left:1168.5px;top:150px;font-size:14px;line-height:20px;-webkit-text-stroke:0.25px #25264d">Journald</div>
<div class="a" style="left:0;top:173px;width:1262px;height:25px;background:#fbfbfd;border-top:1px solid #d6d7e5"></div>
<div class="a" style="left:155px;top:178px;width:1px;height:15px;background:#d8d9e6"></div>
<div class="a" style="left:245px;top:178px;width:1px;height:15px;background:#d8d9e6"></div>
<div class="a" style="left:1162px;top:178px;width:1px;height:15px;background:#d8d9e6"></div>
<div class="a nowrap" style="left:10.5px;top:175px;line-height:20px;transform:scaleX(0.988);transform-origin:0 0"><span style="font-size:14.5px;-webkit-text-stroke:0.6px #25264d">Mar 26, 11:09:34</span><span style="font-size:12.4px;color:#4e5078">.439</span></div>
<div class="a" style="left:161px;top:177px;width:39px;height:18px;border-radius:4px;background:#dcdce7"></div>
<div class="a nowrap" style="left:165px;top:175px;font-size:14.5px;line-height:20px;color:#2f3157;-webkit-text-stroke:0.3px #2f3157;transform:scaleX(0.884);transform-origin:0 0">INFO</div>
<div class="a nowrap mono" style="left:251.5px;top:177px;font-size:14px;line-height:20px;color:#2c2e55;-webkit-text-stroke:0.15px currentColor">Stopped kubelet: The Kubernetes Node Agent.</div>
<div class="a nowrap" style="left:1168.5px;top:175px;font-size:14px;line-height:20px;-webkit-text-stroke:0.25px #25264d">Journald</div>
<div class="a" style="left:0;top:198px;width:1262px;height:25px;background:#f2f2f6;border-top:1px solid #d6d7e5"></div>
<div class="a" style="left:155px;top:203px;width:1px;height:15px;background:#d8d9e6"></div>
<div class="a" style="left:245px;top:203px;width:1px;height:15px;background:#d8d9e6"></div>
<div class="a" style="left:1162px;top:203px;width:1px;height:15px;background:#d8d9e6"></div>
<div class="a nowrap" style="left:10.5px;top:200px;line-height:20px;transform:scaleX(0.988);transform-origin:0 0"><span style="font-size:14.5px;-webkit-text-stroke:0.6px #25264d">Mar 26, 11:09:34</span><span style="font-size:12.4px;color:#4e5078">.439</span></div>
<div class="a" style="left:161px;top:202px;width:39px;height:18px;border-radius:4px;background:#dcdce7"></div>
<div class="a nowrap" style="left:165px;top:200px;font-size:14.5px;line-height:20px;color:#2f3157;-webkit-text-stroke:0.3px #2f3157;transform:scaleX(0.884);transform-origin:0 0">INFO</div>
<div class="a nowrap mono" style="left:251.5px;top:202px;font-size:14px;line-height:20px;color:#2c2e55;-webkit-text-stroke:0.15px currentColor">kubelet.service: Scheduled restart job, restart counter is at <span style="color:#b0268b">1029439</span>.</div>
<div class="a nowrap" style="left:1168.5px;top:200px;font-size:14px;line-height:20px;-webkit-text-stroke:0.25px #25264d">Journald</div>
<div class="a" style="left:0;top:223px;width:1262px;height:25px;background:#fbfbfd;border-top:1px solid #d6d7e5"></div>
<div class="a" style="left:155px;top:228px;width:1px;height:15px;background:#d8d9e6"></div>
<div class="a" style="left:245px;top:228px;width:1px;height:15px;background:#d8d9e6"></div>
<div class="a" style="left:1162px;top:228px;width:1px;height:15px;background:#d8d9e6"></div>
<div class="a" style="left:0;top:228px;width:4px;height:15px;border-radius:0 2px 2px 0;background:#b0820e"></div>
<div class="a nowrap" style="left:10.5px;top:225px;line-height:20px;transform:scaleX(0.988);transform-origin:0 0"><span style="font-size:14.5px;-webkit-text-stroke:0.6px #25264d">Mar 26, 11:09:34</span><span style="font-size:12.4px;color:#4e5078">.395</span></div>
<div class="a" style="left:161px;top:227px;width:48px;height:18px;border-radius:4px;background:#f6e6d2"></div>
<div class="a nowrap" style="left:165px;top:225px;font-size:14.5px;line-height:20px;color:#8a5d05;-webkit-text-stroke:0.3px #8a5d05;transform:scaleX(0.891);transform-origin:0 0">WARN</div>
<div class="a nowrap mono" style="left:251.5px;top:227px;font-size:14px;line-height:20px;color:#2c2e55;-webkit-text-stroke:0.15px currentColor">snap.kubelet.daemon.service: Failed with result <span style="color:#1d767c">'exit-code'</span>.</div>
<div class="a nowrap" style="left:1168.5px;top:225px;font-size:14px;line-height:20px;-webkit-text-stroke:0.25px #25264d">Journald</div>
<div class="a" style="left:0;top:248px;width:1262px;height:25px;background:#f2f2f6;border-top:1px solid #d6d7e5"></div>
<div class="a" style="left:155px;top:253px;width:1px;height:15px;background:#d8d9e6"></div>
<div class="a" style="left:245px;top:253px;width:1px;height:15px;background:#d8d9e6"></div>
<div class="a" style="left:1162px;top:253px;width:1px;height:15px;background:#d8d9e6"></div>
<div class="a nowrap" style="left:10.5px;top:250px;line-height:20px;transform:scaleX(0.988);transform-origin:0 0"><span style="font-size:14.5px;-webkit-text-stroke:0.6px #25264d">Mar 26, 11:09:34</span><span style="font-size:12.4px;color:#4e5078">.395</span></div>
<div class="a" style="left:161px;top:252px;width:39px;height:18px;border-radius:4px;background:#dcdce7"></div>
<div class="a nowrap" style="left:165px;top:250px;font-size:14.5px;line-height:20px;color:#2f3157;-webkit-text-stroke:0.3px #2f3157;transform:scaleX(0.884);transform-origin:0 0">INFO</div>
<div class="a nowrap mono" style="left:251.5px;top:252px;font-size:14px;line-height:20px;color:#2c2e55;-webkit-text-stroke:0.15px currentColor">snap.kubelet.daemon.service: Main process exited, code=exited, status=<span style="color:#b0268b">1</span>/FAILURE</div>
<div class="a nowrap" style="left:1168.5px;top:250px;font-size:14px;line-height:20px;-webkit-text-stroke:0.25px #25264d">Journald</div>
<div class="a" style="left:0;top:273px;width:1262px;height:45px;background:#fbfbfd;border-top:1px solid #d6d7e5"></div>
<div class="a" style="left:155px;top:278px;width:1px;height:35px;background:#d8d9e6"></div>
<div class="a" style="left:245px;top:278px;width:1px;height:35px;background:#d8d9e6"></div>
<div class="a" style="left:1162px;top:278px;width:1px;height:35px;background:#d8d9e6"></div>
<div class="a nowrap" style="left:10.5px;top:275px;line-height:20px;transform:scaleX(0.988);transform-origin:0 0"><span style="font-size:14.5px;-webkit-text-stroke:0.6px #25264d">Mar 26, 11:09:34</span><span style="font-size:12.4px;color:#4e5078">.392</span></div>
<div class="a" style="left:161px;top:277px;width:39px;height:18px;border-radius:4px;background:#dcdce7"></div>
<div class="a nowrap" style="left:165px;top:275px;font-size:14.5px;line-height:20px;color:#2f3157;-webkit-text-stroke:0.3px #2f3157;transform:scaleX(0.884);transform-origin:0 0">INFO</div>
<div class="a nowrap mono" style="left:251.5px;top:277px;font-size:14px;line-height:20px;color:#2c2e55;-webkit-text-stroke:0.15px currentColor">E0326 <span style="color:#b0268b">11:10:30.392229 982641</span> run.go:<span style="color:#b0268b">72</span>] <span style="color:#1d767c">"command failed"</span> err=<span style="color:#1d767c">"failed to run Kubelet: running with swap on</span></div>
<div class="a nowrap mono" style="left:251.5px;top:297px;font-size:14px;line-height:20px;color:#2c2e55;-webkit-text-stroke:0.15px currentColor"><span style="color:#1d767c">is not supported, please disable swap or set --fail-swap-on flag to false"</span></div>
<div class="a nowrap" style="left:1168.5px;top:275px;font-size:14px;line-height:20px;-webkit-text-stroke:0.25px #25264d">Journald</div>
<div class="a" style="left:0;top:318px;width:1262px;height:25px;background:#f2f2f6;border-top:1px solid #d6d7e5"></div>
<div class="a" style="left:155px;top:323px;width:1px;height:15px;background:#d8d9e6"></div>
<div class="a" style="left:245px;top:323px;width:1px;height:15px;background:#d8d9e6"></div>
<div class="a" style="left:1162px;top:323px;width:1px;height:15px;background:#d8d9e6"></div>
<div class="a nowrap" style="left:10.5px;top:320px;line-height:20px;transform:scaleX(0.988);transform-origin:0 0"><span style="font-size:14.5px;-webkit-text-stroke:0.6px #25264d">Mar 26, 11:09:34</span><span style="font-size:12.4px;color:#4e5078">.392</span></div>
<div class="a" style="left:161px;top:322px;width:39px;height:18px;border-radius:4px;background:#dcdce7"></div>
<div class="a nowrap" style="left:165px;top:320px;font-size:14.5px;line-height:20px;color:#2f3157;-webkit-text-stroke:0.3px #2f3157;transform:scaleX(0.884);transform-origin:0 0">INFO</div>
<div class="a nowrap mono" style="left:251.5px;top:322px;font-size:14px;line-height:20px;color:#2c2e55;-webkit-text-stroke:0.15px currentColor">I0326 <span style="color:#b0268b">11:10:30.392167 982641</span> swap_util.go:<span style="color:#b0268b">115</span>] <span style="color:#1d767c">"Swap is on"</span> /proc/swaps contents=&lt;</div>
<div class="a nowrap" style="left:1168.5px;top:320px;font-size:14px;line-height:20px;-webkit-text-stroke:0.25px #25264d">Journald</div>
<div class="a" style="left:0;top:343px;width:1262px;height:25px;background:#fbfbfd;border-top:1px solid #d6d7e5"></div>
<div class="a" style="left:155px;top:348px;width:1px;height:15px;background:#d8d9e6"></div>
<div class="a" style="left:245px;top:348px;width:1px;height:15px;background:#d8d9e6"></div>
<div class="a" style="left:1162px;top:348px;width:1px;height:15px;background:#d8d9e6"></div>
<div class="a nowrap" style="left:10.5px;top:345px;line-height:20px;transform:scaleX(0.988);transform-origin:0 0"><span style="font-size:14.5px;-webkit-text-stroke:0.6px #25264d">Mar 26, 11:09:34</span><span style="font-size:12.4px;color:#4e5078">.392</span></div>
<div class="a" style="left:161px;top:347px;width:39px;height:18px;border-radius:4px;background:#dcdce7"></div>
<div class="a nowrap" style="left:165px;top:345px;font-size:14.5px;line-height:20px;color:#2f3157;-webkit-text-stroke:0.3px #2f3157;transform:scaleX(0.884);transform-origin:0 0">INFO</div>
<div class="a nowrap mono" style="left:251.5px;top:347px;font-size:14px;line-height:20px;color:#2c2e55;-webkit-text-stroke:0.15px currentColor">Filename Type Size Used Priority</div>
<div class="a nowrap" style="left:1168.5px;top:345px;font-size:14px;line-height:20px;-webkit-text-stroke:0.25px #25264d">Journald</div>
<div class="a" style="left:0;top:368px;width:1262px;height:25px;background:#f2f2f6;border-top:1px solid #d6d7e5"></div>
<div class="a" style="left:155px;top:373px;width:1px;height:15px;background:#d8d9e6"></div>
<div class="a" style="left:245px;top:373px;width:1px;height:15px;background:#d8d9e6"></div>
<div class="a" style="left:1162px;top:373px;width:1px;height:15px;background:#d8d9e6"></div>
<div class="a nowrap" style="left:10.5px;top:370px;line-height:20px;transform:scaleX(0.988);transform-origin:0 0"><span style="font-size:14.5px;-webkit-text-stroke:0.6px #25264d">Mar 26, 11:09:34</span><span style="font-size:12.4px;color:#4e5078">.392</span></div>
<div class="a" style="left:161px;top:372px;width:39px;height:18px;border-radius:4px;background:#dcdce7"></div>
<div class="a nowrap" style="left:165px;top:370px;font-size:14.5px;line-height:20px;color:#2f3157;-webkit-text-stroke:0.3px #2f3157;transform:scaleX(0.884);transform-origin:0 0">INFO</div>
<div class="a nowrap mono" style="left:251.5px;top:372px;font-size:14px;line-height:20px;color:#2c2e55;-webkit-text-stroke:0.15px currentColor"><span style="color:#1d767c">/swapfile</span> file <span style="color:#b0268b">2097148 947760 -2</span></div>
<div class="a nowrap" style="left:1168.5px;top:370px;font-size:14px;line-height:20px;-webkit-text-stroke:0.25px #25264d">Journald</div>
<div class="a" style="left:0;top:393px;width:1262px;height:25px;background:#fbfbfd;border-top:1px solid #d6d7e5"></div>
<div class="a" style="left:155px;top:398px;width:1px;height:15px;background:#d8d9e6"></div>
<div class="a" style="left:245px;top:398px;width:1px;height:15px;background:#d8d9e6"></div>
<div class="a" style="left:1162px;top:398px;width:1px;height:15px;background:#d8d9e6"></div>
<div class="a nowrap" style="left:10.5px;top:395px;line-height:20px;transform:scaleX(0.988);transform-origin:0 0"><span style="font-size:14.5px;-webkit-text-stroke:0.6px #25264d">Mar 26, 11:09:34</span><span style="font-size:12.4px;color:#4e5078">.392</span></div>
<div class="a" style="left:161px;top:397px;width:39px;height:18px;border-radius:4px;background:#dcdce7"></div>
<div class="a nowrap" style="left:165px;top:395px;font-size:14.5px;line-height:20px;color:#2f3157;-webkit-text-stroke:0.3px #2f3157;transform:scaleX(0.884);transform-origin:0 0">INFO</div>
<div class="a nowrap mono" style="left:251.5px;top:397px;font-size:14px;line-height:20px;color:#2c2e55;-webkit-text-stroke:0.15px currentColor">&gt;</div>
<div class="a nowrap" style="left:1168.5px;top:395px;font-size:14px;line-height:20px;-webkit-text-stroke:0.25px #25264d">Journald</div>
<div class="a" style="left:0;top:418px;width:1262px;height:25px;background:#f2f2f6;border-top:1px solid #d6d7e5"></div>
<div class="a" style="left:155px;top:423px;width:1px;height:15px;background:#d8d9e6"></div>
<div class="a" style="left:245px;top:423px;width:1px;height:15px;background:#d8d9e6"></div>
<div class="a" style="left:1162px;top:423px;width:1px;height:15px;background:#d8d9e6"></div>
<div class="a nowrap" style="left:10.5px;top:420px;line-height:20px;transform:scaleX(0.988);transform-origin:0 0"><span style="font-size:14.5px;-webkit-text-stroke:0.6px #25264d">Mar 26, 11:09:34</span><span style="font-size:12.4px;color:#4e5078">.391</span></div>
<div class="a" style="left:161px;top:422px;width:39px;height:18px;border-radius:4px;background:#dcdce7"></div>
<div class="a nowrap" style="left:165px;top:420px;font-size:14.5px;line-height:20px;color:#2f3157;-webkit-text-stroke:0.3px #2f3157;transform:scaleX(0.884);transform-origin:0 0">INFO</div>
<div class="a nowrap mono" style="left:251.5px;top:422px;font-size:14px;line-height:20px;color:#2c2e55;-webkit-text-stroke:0.15px currentColor">I0326 <span style="color:#b0268b">11:10:30.391481 982641</span> server.go:<span style="color:#b0268b">571</span>] <span style="color:#1d767c">"No api server defined - no events will be sent to API server"</span></div>
<div class="a nowrap" style="left:1168.5px;top:420px;font-size:14px;line-height:20px;-webkit-text-stroke:0.25px #25264d">Journald</div>
<div class="a" style="left:0;top:443px;width:1262px;height:45px;background:#fbfbfd;border-top:1px solid #d6d7e5"></div>
<div class="a" style="left:155px;top:448px;width:1px;height:35px;background:#d8d9e6"></div>
<div class="a" style="left:245px;top:448px;width:1px;height:35px;background:#d8d9e6"></div>
<div class="a" style="left:1162px;top:448px;width:1px;height:35px;background:#d8d9e6"></div>
<div class="a nowrap" style="left:10.5px;top:445px;line-height:20px;transform:scaleX(0.988);transform-origin:0 0"><span style="font-size:14.5px;-webkit-text-stroke:0.6px #25264d">Mar 26, 11:09:34</span><span style="font-size:12.4px;color:#4e5078">.391</span></div>
<div class="a" style="left:161px;top:447px;width:39px;height:18px;border-radius:4px;background:#dcdce7"></div>
<div class="a nowrap" style="left:165px;top:445px;font-size:14.5px;line-height:20px;color:#2f3157;-webkit-text-stroke:0.3px #2f3157;transform:scaleX(0.884);transform-origin:0 0">INFO</div>
<div class="a nowrap mono" style="left:251.5px;top:447px;font-size:14px;line-height:20px;color:#2c2e55;-webkit-text-stroke:0.15px currentColor">I0326 <span style="color:#b0268b">11:10:30.391500 982641</span> server.go:<span style="color:#b0268b">772</span>] <span style="color:#1d767c">"--cgroups-per-qos enabled, but --cgroup-root was not</span></div>
<div class="a nowrap mono" style="left:251.5px;top:467px;font-size:14px;line-height:20px;color:#2c2e55;-webkit-text-stroke:0.15px currentColor"><span style="color:#1d767c">specified. defaulting to /"</span></div>
<div class="a nowrap" style="left:1168.5px;top:445px;font-size:14px;line-height:20px;-webkit-text-stroke:0.25px #25264d">Journald</div>
<div class="a" style="left:0;top:488px;width:1262px;height:65px;background:#f2f2f6;border-top:1px solid #d6d7e5"></div>
<div class="a" style="left:155px;top:493px;width:1px;height:55px;background:#d8d9e6"></div>
<div class="a" style="left:245px;top:493px;width:1px;height:55px;background:#d8d9e6"></div>
<div class="a" style="left:1162px;top:493px;width:1px;height:55px;background:#d8d9e6"></div>
<div class="a nowrap" style="left:10.5px;top:490px;line-height:20px;transform:scaleX(0.988);transform-origin:0 0"><span style="font-size:14.5px;-webkit-text-stroke:0.6px #25264d">Mar 26, 11:09:34</span><span style="font-size:12.4px;color:#4e5078">.386</span></div>
<div class="a" style="left:161px;top:492px;width:39px;height:18px;border-radius:4px;background:#dcdce7"></div>
<div class="a nowrap" style="left:165px;top:490px;font-size:14.5px;line-height:20px;color:#2f3157;-webkit-text-stroke:0.3px #2f3157;transform:scaleX(0.884);transform-origin:0 0">INFO</div>
<div class="a nowrap mono" style="left:251.5px;top:492px;font-size:14px;line-height:20px;color:#2c2e55;-webkit-text-stroke:0.15px currentColor">I0326 <span style="color:#b0268b">11:10:30.386010 982641</span> server.go:<span style="color:#b0268b">1421</span>] <span style="color:#1d767c">"CRI implementation should be updated to support RuntimeConfig</span></div>
<div class="a nowrap mono" style="left:251.5px;top:512px;font-size:14px;line-height:20px;color:#2c2e55;-webkit-text-stroke:0.15px currentColor"><span style="color:#1d767c">when KubeletCgroupDriverFromCRI feature gate has been enabled. Falling back to using cgroupDriver from</span></div>
<div class="a nowrap mono" style="left:251.5px;top:532px;font-size:14px;line-height:20px;color:#2c2e55;-webkit-text-stroke:0.15px currentColor"><span style="color:#1d767c">kubelet config."</span></div>
<div class="a nowrap" style="left:1168.5px;top:490px;font-size:14px;line-height:20px;-webkit-text-stroke:0.25px #25264d">Journald</div>
<div class="a" style="left:0;top:553px;width:1262px;height:45px;background:#fbfbfd;border-top:1px solid #d6d7e5"></div>
<div class="a" style="left:155px;top:558px;width:1px;height:35px;background:#d8d9e6"></div>
<div class="a" style="left:245px;top:558px;width:1px;height:35px;background:#d8d9e6"></div>
<div class="a" style="left:1162px;top:558px;width:1px;height:35px;background:#d8d9e6"></div>
<div class="a nowrap" style="left:10.5px;top:555px;line-height:20px;transform:scaleX(0.988);transform-origin:0 0"><span style="font-size:14.5px;-webkit-text-stroke:0.6px #25264d">Mar 26, 11:09:34</span><span style="font-size:12.4px;color:#4e5078">.385</span></div>
<div class="a" style="left:161px;top:557px;width:39px;height:18px;border-radius:4px;background:#dcdce7"></div>
<div class="a nowrap" style="left:165px;top:555px;font-size:14.5px;line-height:20px;color:#2f3157;-webkit-text-stroke:0.3px #2f3157;transform:scaleX(0.884);transform-origin:0 0">INFO</div>
<div class="a nowrap mono" style="left:251.5px;top:557px;font-size:14px;line-height:20px;color:#2c2e55;-webkit-text-stroke:0.15px currentColor">E0326 <span style="color:#b0268b">11:10:30.385825 982641</span> log.go:<span style="color:#b0268b">32</span>] <span style="color:#1d767c">"RuntimeConfig from runtime service failed"</span> err=<span style="color:#1d767c">"rpc error: code =</span></div>
<div class="a nowrap mono" style="left:251.5px;top:577px;font-size:14px;line-height:20px;color:#2c2e55;-webkit-text-stroke:0.15px currentColor"><span style="color:#1d767c">Unimplemented desc = unknown method RuntimeConfig for service runtime.v1.RuntimeService"</span></div>
<div class="a nowrap" style="left:1168.5px;top:555px;font-size:14px;line-height:20px;-webkit-text-stroke:0.25px #25264d">Journald</div>
</div>
<div class="a" style="left:66px;top:731px;width:1262px;height:45px;border:1.5px solid #4b56c9;border-right:none"></div>
<div class="a" style="left:66px;top:1047px;width:1263px;height:2px;background:#d2d4e2"></div>
<div class="a" style="left:72px;top:1051px;width:1248px;height:6px;border-radius:3px;background:#d0d1df"></div>
<div class="a" style="left:1386px;top:64px;width:56px;height:55px;border-radius:12px;background:#e7e9f6;border:2px solid #c8cff2"></div>
<svg class="a" style="left:1405px;top:83px" width="18" height="18" viewBox="0 0 18 18"><circle cx="9" cy="9" r="7.4" fill="none" stroke="#3a4ad0" stroke-width="1.6"/><rect x="8.1" y="7.6" width="1.8" height="5.6" fill="#3a4ad0"/><circle cx="9" cy="5.4" r="1.1" fill="#3a4ad0"/></svg>
<div class="a b nowrap" style="left:1450px;top:70px;font-size:24.4px;line-height:20px">Mar 26, 11:09:34<span style="font-size:17.5px;font-weight:normal;color:#4b4d78">.392</span></div>
<div class="a nowrap" style="left:1454.5px;top:99px;font-size:14px;line-height:20px;color:#4b4d78">status</div>
<div class="a nowrap b" style="left:1495.5px;top:99px;font-size:14px;line-height:20px">:</div>
<div class="a nowrap mono" style="left:1502px;top:99px;font-size:14px;line-height:20px;-webkit-text-stroke:0.3px #25264d;transform:scaleX(0.89);transform-origin:0 0">INFO</div>
<div class="a" style="left:1548px;top:100px;width:1px;height:20px;background:#d0d1df"></div>
<div class="a nowrap" style="left:1562px;top:99px;font-size:14px;line-height:20px;color:#4b4d78">loglevel</div>
<div class="a nowrap b" style="left:1612px;top:99px;font-size:14px;line-height:20px">:</div>
<div class="a nowrap mono" style="left:1618.5px;top:99px;font-size:14px;line-height:20px;-webkit-text-stroke:0.3px #25264d;transform:scaleX(0.89);transform-origin:0 0">INFO</div>
<svg class="a" style="left:1839px;top:72px" width="6" height="16" viewBox="0 0 6 16"><circle cx="3" cy="3" r="1.6" fill="#1f2048"/><circle cx="3" cy="8" r="1.6" fill="#1f2048"/><circle cx="3" cy="13" r="1.6" fill="#1f2048"/></svg>
<svg class="a" style="left:1878px;top:72px" width="16" height="16" viewBox="0 0 16 16"><path d="M2 2 L14 14 M14 2 L2 14" stroke="#2a2b4f" stroke-width="1.6"/></svg>
<div class="a" style="left:1386px;top:128px;width:518px;height:1px;background:#d5d6e4"></div>
<div class="a" style="left:1386px;top:137px;width:194px;height:32px;border-radius:8px;background:#dcdce7"></div>
<svg class="a" style="left:1397px;top:145px" width="14" height="16" viewBox="0 0 14 16"><path d="M2 2 L12 8 L2 14 Z" fill="none" stroke="#2a2b4f" stroke-width="1.5" stroke-linejoin="round"/></svg>
<div class="a nowrap" style="left:1422.5px;top:142px;font-size:14.5px;line-height:20px;-webkit-text-stroke:0.6px #25264d;transform:scaleX(0.988);transform-origin:0 0">Show surrounding logs</div>
<div class="a" style="left:1386px;top:177px;width:518px;height:1px;background:#d5d6e4"></div>
<div class="a" style="left:1386px;top:186px;width:502px;height:133px;border-radius:0 0 12px 12px;background:#fbfbfd;overflow:hidden">
<div class="a nowrap" style="left:16px;top:-17px;font-size:14px;line-height:20px">dt.security_context</div>
<div class="a nowrap" style="left:16.5px;top:8px;font-size:14px;line-height:20px;color:#53557b;-webkit-text-stroke:0.2px #53557b">dt.source_entity</div>
<div class="a nowrap" style="left:16.5px;top:32px;font-size:14px;line-height:20px;-webkit-text-stroke:0.2px #25264d;transform:scaleX(0.925);transform-origin:0 0">KUBERNETES_CLUSTER-3DECEE817350003E</div>
<div class="a" style="left:16px;top:63px;width:470px;height:1px;background:#d5d6e4"></div>
<div class="a nowrap" style="left:16.5px;top:71px;font-size:14px;line-height:20px;color:#53557b;-webkit-text-stroke:0.2px #53557b;transform:scaleX(1.03);transform-origin:0 0">dt.entity.kubernetes_cluster</div>
<div class="a nowrap" style="left:16.5px;top:95px;font-size:14px;line-height:20px;-webkit-text-stroke:0.2px #25264d;transform:scaleX(0.925);transform-origin:0 0">KUBERNETES_CLUSTER-3DECEE817350003E</div>
</div>
<div class="a" style="left:1386px;top:328px;width:502px;height:735px;border-radius:14px;background:#fbfbfd"></div>
<div class="a b nowrap" style="left:1402.5px;top:347px;font-size:16px;line-height:20px">Fields</div>
<svg class="a" style="left:1852px;top:350px" width="12" height="10" viewBox="0 0 12 10"><path d="M2 3 L6 7 L10 3" fill="none" stroke="#2a2b4f" stroke-width="1.6"/></svg>
<div class="a" style="left:1893px;top:398px;width:6px;height:660px;border-radius:3px;background:#d3d4e1"></div>
<div class="a nowrap" style="left:1402.5px;top:371px;font-size:14px;line-height:20px;color:#53557b;-webkit-text-stroke:0.2px #53557b">timestamp</div>
<div class="a nowrap" style="left:1402.5px;top:395px;font-size:14px;line-height:20px;-webkit-text-stroke:0.2px #25264d;transform:scaleX(1.000);transform-origin:0 0"><span style="font-size:14.5px;-webkit-text-stroke:0.6px #25264d">Mar 26, 11:09:34</span><span style="font-size:12.4px;color:#4b4d78;-webkit-text-stroke:0">.392</span></div>
<div class="a" style="left:1402px;top:426px;width:470px;height:1px;background:#d5d6e4"></div>
<div class="a nowrap" style="left:1402.5px;top:434px;font-size:14px;line-height:20px;color:#53557b;-webkit-text-stroke:0.2px #53557b">content</div>
<div class="a nowrap" style="left:1402.5px;top:458px;font-size:14px;line-height:20px;-webkit-text-stroke:0.2px #25264d;transform:scaleX(1.012);transform-origin:0 0">E0326 11:10:30.392229 982641 run.go:72] "command failed" err="failed ...</div>
<div class="a" style="left:1402px;top:489px;width:470px;height:1px;background:#d5d6e4"></div>
<div class="a nowrap" style="left:1402.5px;top:497px;font-size:14px;line-height:20px;color:#53557b;-webkit-text-stroke:0.2px #53557b">event.type</div>
<div class="a nowrap" style="left:1402.5px;top:521px;font-size:14px;line-height:20px;-webkit-text-stroke:0.2px #25264d;transform:scaleX(0.805);transform-origin:0 0">LOG</div>
<div class="a" style="left:1402px;top:552px;width:470px;height:1px;background:#d5d6e4"></div>
<div class="a nowrap" style="left:1402.5px;top:560px;font-size:14px;line-height:20px;color:#53557b;-webkit-text-stroke:0.2px #53557b">k8s.cluster.name</div>
<div class="a nowrap" style="left:1402.5px;top:584px;font-size:14px;line-height:20px;-webkit-text-stroke:0.2px #25264d;transform:scaleX(1.030);transform-origin:0 0">grumpy-hog</div>
<div class="a" style="left:1402px;top:615px;width:470px;height:1px;background:#d5d6e4"></div>
<div class="a nowrap" style="left:1402.5px;top:623px;font-size:14px;line-height:20px;color:#53557b;-webkit-text-stroke:0.2px #53557b">log.source</div>
<div class="a nowrap" style="left:1402.5px;top:647px;font-size:14px;line-height:20px;-webkit-text-stroke:0.2px #25264d;transform:scaleX(1.000);transform-origin:0 0">Journald</div>
<div class="a" style="left:1402px;top:678px;width:470px;height:1px;background:#d5d6e4"></div>
<div class="a nowrap" style="left:1402.5px;top:686px;font-size:14px;line-height:20px;color:#53557b;-webkit-text-stroke:0.2px #53557b">loglevel</div>
<div class="a nowrap" style="left:1402.5px;top:710px;font-size:14px;line-height:20px;-webkit-text-stroke:0.2px #25264d;transform:scaleX(0.916);transform-origin:0 0">INFO</div>
<div class="a" style="left:1402px;top:741px;width:470px;height:1px;background:#d5d6e4"></div>
<div class="a nowrap" style="left:1402.5px;top:749px;font-size:14px;line-height:20px;color:#53557b;-webkit-text-stroke:0.2px #53557b">status</div>
<div class="a nowrap" style="left:1402.5px;top:773px;font-size:14px;line-height:20px;-webkit-text-stroke:0.2px #25264d;transform:scaleX(0.916);transform-origin:0 0">INFO</div>
<div class="a" style="left:1402px;top:804px;width:470px;height:1px;background:#d5d6e4"></div>
<div class="a nowrap" style="left:1402.5px;top:812px;font-size:14px;line-height:20px;color:#53557b;-webkit-text-stroke:0.2px #53557b">dt.openpipeline.pipelines</div>
<div class="a nowrap" style="left:1402.5px;top:836px;font-size:14px;line-height:20px;-webkit-text-stroke:0.2px #25264d;transform:scaleX(1.000);transform-origin:0 0">logs:default</div>
<div class="a" style="left:1402px;top:867px;width:470px;height:1px;background:#d5d6e4"></div>
<div class="a nowrap" style="left:1402.5px;top:875px;font-size:14px;line-height:20px;color:#53557b;-webkit-text-stroke:0.2px #53557b">journald.unit</div>
<div class="a nowrap" style="left:1402.5px;top:899px;font-size:14px;line-height:20px;-webkit-text-stroke:0.2px #25264d;transform:scaleX(1.000);transform-origin:0 0">snap.kubelet.daemon.service</div>
<div class="a" style="left:1402px;top:930px;width:470px;height:1px;background:#d5d6e4"></div>
<div class="a nowrap" style="left:1402.5px;top:938px;font-size:14px;line-height:20px;color:#53557b;-webkit-text-stroke:0.2px #53557b">k8s.cluster.uid</div>
<div class="a nowrap" style="left:1402.5px;top:962px;font-size:14px;line-height:20px;-webkit-text-stroke:0.2px #25264d;transform:scaleX(1.080);transform-origin:0 0">88e8f1e8-7fff-45e3-b9b7-b89f7dffc413</div>
<div class="a" style="left:1402px;top:993px;width:470px;height:1px;background:#d5d6e4"></div>
<div class="a nowrap" style="left:1402.5px;top:1001px;font-size:14px;line-height:20px;color:#53557b;-webkit-text-stroke:0.2px #53557b">k8s.node.name</div>
<div class="a nowrap" style="left:1402.5px;top:1025px;font-size:14px;line-height:20px;-webkit-text-stroke:0.2px #25264d;transform:scaleX(1.030);transform-origin:0 0">kkonopka-ubuntu</div>
<svg class="a" style="left:1854px;top:902px" width="6" height="16" viewBox="0 0 6 16"><circle cx="3" cy="2.5" r="1.5" fill="#2a2b4f"/><circle cx="3" cy="8" r="1.5" fill="#2a2b4f"/><circle cx="3" cy="13.5" r="1.5" fill="#2a2b4f"/></svg>
<div class="a" style="left:1510px;top:612px;width:409px;height:282px;border-radius:12px;background:#fcfcfe;box-shadow:0 2px 10px rgba(40,40,80,0.18),0 0 1px rgba(40,40,80,0.3)"></div>
<svg class="a" style="left:1524px;top:623px" width="17" height="17" viewBox="0 0 17 17"><path d="M1.7 12 V1.6 H10" fill="none" stroke="#2a2b4f" stroke-width="1.5"/><rect x="4.6" y="4.4" width="10.3" height="11.2" fill="none" stroke="#2a2b4f" stroke-width="1.5"/></svg>
<div class="a nowrap" style="left:1550.5px;top:622px;font-size:14.4px;line-height:20px;-webkit-text-stroke:0.4px #25264d;transform:scaleX(0.9);transform-origin:0 0">Copy</div>
<div class="a" style="left:1514px;top:652px;width:402px;height:1px;background:#d8d9e6"></div>
<div class="a nowrap" style="left:1526px;top:668px;font-size:12.5px;line-height:18px;color:#53557b">Filter</div>
<div class="a" style="left:1514px;top:689px;width:402px;height:32px;border-radius:8px;background:#d2d3e2"></div>
<svg class="a" style="left:1522px;top:696px" width="20" height="17" viewBox="0 0 20 17"><path d="M4.8 2.2 H18.3 L13.1 8.3 V12.6 L10 14.8 V8.3 Z" fill="none" stroke="#2a2b4f" stroke-width="1.5" stroke-linejoin="round"/><path d="M1.2 9.5 H5.8 M3.5 7.2 V11.8" stroke="#2a2b4f" stroke-width="1.4"/></svg>
<div class="a nowrap" style="left:1550.5px;top:695px;font-size:14.4px;line-height:20px;-webkit-text-stroke:0.35px #25264d">Filter by: <span style="color:#2448b8;-webkit-text-stroke:0.3px #2448b8">journald.unit</span> <span style="color:#9a3fb8;-webkit-text-stroke:0.3px #9a3fb8">=</span> snap.kubelet.daemon.service</div>
<svg class="a" style="left:1522px;top:728px" width="20" height="17" viewBox="0 0 20 17"><path d="M4.8 2.2 H18.3 L13.1 8.3 V12.6 L10 14.8 V8.3 Z" fill="none" stroke="#2a2b4f" stroke-width="1.5" stroke-linejoin="round"/><path d="M1.2 10.5 H5.8" stroke="#2a2b4f" stroke-width="1.4"/></svg>
<div class="a nowrap" style="left:1550.5px;top:727px;font-size:14.4px;line-height:20px;-webkit-text-stroke:0.35px #25264d">Exclude by: <span style="color:#2448b8;-webkit-text-stroke:0.3px #2448b8">journald.unit</span> <span style="color:#9a3fb8;-webkit-text-stroke:0.3px #9a3fb8">!=</span> snap.kubelet.daemon.service</div>
<svg class="a" style="left:1522px;top:760px" width="20" height="17" viewBox="0 0 20 17"><path d="M3.5 2.2 H17 L11.8 8.3 V12.6 L8.7 14.8 V8.3 Z" fill="none" stroke="#2a2b4f" stroke-width="1.5" stroke-linejoin="round"/></svg>
<div class="a nowrap" style="left:1550.5px;top:759px;font-size:14.4px;line-height:20px;-webkit-text-stroke:0.35px #25264d">Exists: <span style="color:#2448b8;-webkit-text-stroke:0.3px #2448b8">journald.unit</span> <span style="color:#9a3fb8;-webkit-text-stroke:0.3px #9a3fb8">=</span> *</div>
<svg class="a" style="left:1522px;top:792px" width="20" height="17" viewBox="0 0 20 17"><path d="M3.5 2.2 H17 L11.8 8.3 V12.6 L8.7 14.8 V8.3 Z" fill="none" stroke="#2a2b4f" stroke-width="1.5" stroke-linejoin="round"/></svg>
<div class="a nowrap" style="left:1550.5px;top:791px;font-size:14.4px;line-height:20px;-webkit-text-stroke:0.35px #25264d">Not exists: <span style="color:#2448b8;-webkit-text-stroke:0.3px #2448b8">journald.unit</span> <span style="color:#9a3fb8;-webkit-text-stroke:0.3px #9a3fb8">!=</span> *</div>
<div class="a" style="left:1514px;top:821px;width:402px;height:1px;background:#d8d9e6"></div>
<div class="a nowrap" style="left:1526px;top:837px;font-size:12.5px;line-height:18px;color:#53557b">Column</div>
<svg class="a" style="left:1524px;top:865px" width="16" height="16" viewBox="0 0 16 16"><rect x="1.2" y="1.2" width="13.6" height="13.6" fill="none" stroke="#2a2b4f" stroke-width="1.6"/><path d="M1.2 5 H14.8 M5.7 5 V14.8 M10.3 5 V14.8" stroke="#2a2b4f" stroke-width="1.6"/></svg>
<div class="a nowrap" style="left:1550.5px;top:864px;font-size:14.4px;line-height:20px;-webkit-text-stroke:0.35px #25264d">Add column for: <span style="color:#2448b8;-webkit-text-stroke:0.3px #2448b8">journald.unit</span></div>
<svg class="a" style="left:1739.5px;top:714px" width="23.3" height="27.6" viewBox="0 0 22 26"><path d="M7 13 V3.2 C7 1.6 9.6 1.6 9.6 3.2 V10.5 V9 C9.6 7.6 12.2 7.6 12.2 9 V11 C12.2 9.6 14.8 9.6 14.8 11 V12 C14.8 10.8 17.4 10.8 17.4 12 V17.5 C17.4 21 15.5 24 12 24 H10.5 C8 24 6.8 22.6 5.5 20.5 L2.2 15.2 C1.3 13.6 3.3 12.3 4.5 13.5 L7 16 Z" fill="#fff" stroke="#111" stroke-width="1.2" stroke-linejoin="round"/><path d="M9.6 10.5 V15 M12.2 11 V15 M14.8 12 V15" stroke="#111" stroke-width="1"/></svg>
<div class="a" style="left:1365px;top:546px;width:2px;height:36px;background:#3b3d66"></div>
<svg class="a" style="left:0;top:0;overflow:visible" width="1920" height="1080" viewBox="0 0 1920 1080"><defs><filter id="sh" x="-10%" y="-50%" width="130%" height="250%"><feGaussianBlur in="SourceAlpha" stdDeviation="2.5"/><feOffset dx="1" dy="4" result="o"/><feComponentTransfer><feFuncA type="linear" slope="0.55"/></feComponentTransfer><feMerge><feMergeNode/><feMergeNode in="SourceGraphic"/></feMerge></filter></defs><g filter="url(#sh)"><path d="M 1169.5 556.2 L 1353.5 565.0 L 1354.0 555.4 L 1382.5 571.7 L 1352.5 584.7 L 1353.0 575.4 L 1169.5 566.2 Z" fill="#fb3d3f" stroke="#fb3d3f" stroke-width="1" stroke-linejoin="miter"/><circle cx="1169.5" cy="561.2" r="5.0" fill="#fb3d3f"/><path d="M 1169.8 866.9 L 1353.8 875.7 L 1354.3 866.1 L 1382.8 882.4 L 1352.8 895.4 L 1353.3 886.1 L 1169.8 876.9 Z" fill="#fb3d3f" stroke="#fb3d3f" stroke-width="1" stroke-linejoin="miter"/><circle cx="1169.8" cy="871.9" r="5.0" fill="#fb3d3f"/><path d="M 1169.8 998.9 L 1353.8 1007.7 L 1354.3 998.1 L 1382.8 1014.4 L 1352.8 1027.4 L 1353.3 1018.1 L 1169.8 1008.9 Z" fill="#fb3d3f" stroke="#fb3d3f" stroke-width="1" stroke-linejoin="miter"/><circle cx="1169.8" cy="1003.9" r="5.0" fill="#fb3d3f"/></g>
<g filter="url(#sh)"><rect x="1349.5" y="113" width="271" height="83.5" fill="none" stroke="#fb3d3f" stroke-width="3.2"/></g></svg>
</body></html>
